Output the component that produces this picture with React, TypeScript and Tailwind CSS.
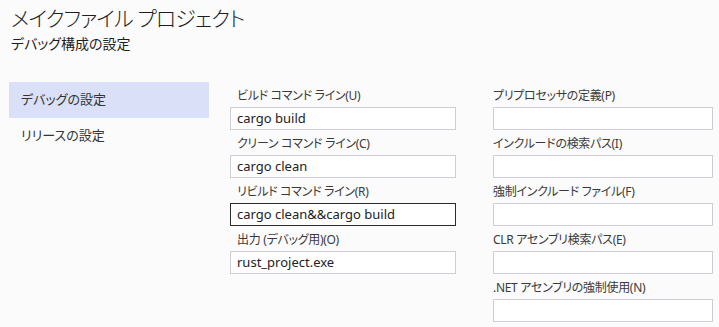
import React from 'react'

const jp = "font-['Segoe_UI','Noto_Sans','Noto_Sans_CJK_JP',sans-serif] [font-feature-settings:'palt']"

type Field = { label: string; value?: string; focused?: boolean }

const left: Field[] = [
    { label: 'ビルド コマンド ライン(U)', value: 'cargo build' },
    { label: 'クリーン コマンド ライン(C)', value: 'cargo clean' },
    { label: 'リビルド コマンド ライン(R)', value: 'cargo clean&&cargo build', focused: true },
    { label: '出力 (デバッグ用)(O)', value: 'rust_project.exe' },
]

const right: Field[] = [
    { label: 'プリプロセッサの定義(P)' },
    { label: 'インクルードの検索パス(I)' },
    { label: '強制インクルード ファイル(F)' },
    { label: 'CLR アセンブリ検索パス(E)' },
    { label: '.NET アセンブリの強制使用(N)' },
]

const FieldRow: React.FC<{ field: Field; indent?: boolean }> = ({ field, indent }) => (
    <div className="flex flex-col mb-[3px]">
        <label
            className={
                'h-[22px] leading-[22px] text-[12px] text-[#3a3a3a] tracking-[-0.3px] ' + (indent ? 'pl-[7px]' : 'pl-0')
            }
        >
            {field.label}
        </label>
        <div
            className={
                'h-[23px] flex items-center pl-[6px] text-[13px] text-[#222] bg-white border ' +
                (field.focused ? 'border-[#2b2b2b]' : 'border-[#cdcdd6]')
            }
        >
            {field.value}
        </div>
    </div>
)

const App: React.FC = () => {
    return (
        <div className={`w-[719px] h-[327px] bg-[#fbfbfb] overflow-hidden ${jp}`}>
            <div className="pl-[11px] pt-[3px]">
                <h1 className="text-[21px] leading-[30px] font-light text-[#1e1e1e] tracking-[-0.9px]">
                    メイクファイル プロジェクト
                </h1>
                <h2 className="text-[14px] leading-[20px] mt-[1px] text-[#1e1e1e]">デバッグ構成の設定</h2>
            </div>
            <div className="flex mt-[28px]">
                <nav className="w-[200px] ml-[9px] flex flex-col text-[13px] text-[#333]">
                    <div className="h-[36px] flex items-center pl-[12px] bg-[#dae0f8]">デバッグの設定</div>
                    <div className="h-[36px] flex items-center pl-[12px]">リリースの設定</div>
                </nav>
                <div className="w-[226px] ml-[21px] pt-[3px]">
                    {left.map((f) => (
                        <FieldRow key={f.label} field={f} indent />
                    ))}
                </div>
                <div className="w-[220px] ml-[37px] pt-[3px]">
                    {right.map((f) => (
                        <FieldRow key={f.label} field={f} />
                    ))}
                </div>
            </div>
        </div>
    )
}

export default App
